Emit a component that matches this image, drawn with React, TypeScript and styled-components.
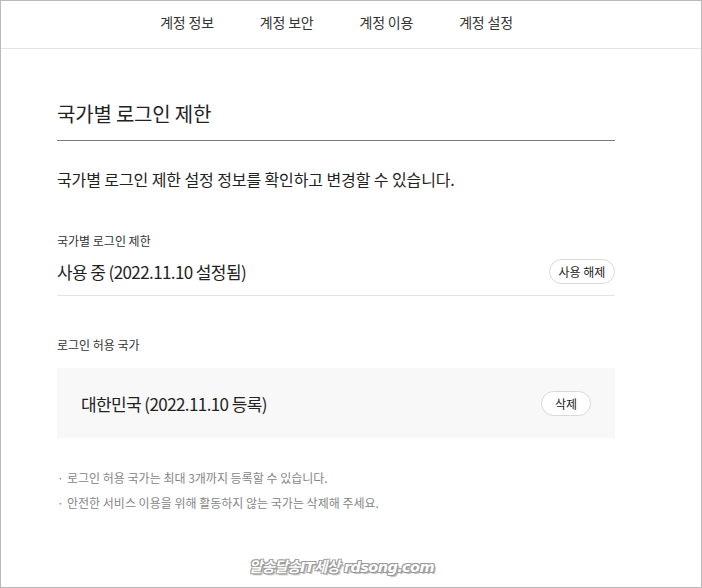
import React from 'react'
import styled, { createGlobalStyle } from 'styled-components'

const GlobalStyle = createGlobalStyle`
  html, body {
    margin: 0;
    padding: 0;
    background: #fff;
  }
  body {
    font-family: 'Noto Sans CJK KR', 'Noto Sans', sans-serif;
    color: #222;
  }
`

const Frame = styled.div`
  width: 702px;
  height: 588px;
  box-sizing: border-box;
  border: 1px solid #b9b9b9;
  position: relative;
  overflow: hidden;
`

const TopNav = styled.nav`
  height: 48px;
  border-bottom: 1px solid #e6e6e6;
  display: flex;
  justify-content: center;
  align-items: center;
  gap: 46px;
  padding-right: 29px;
  padding-bottom: 6px;
  box-sizing: border-box;
`

const NavItem = styled.a`
  font-size: 14px;
  color: #333;
  letter-spacing: -0.2px;
`

const Content = styled.main`
  width: 558px;
  margin-left: 56px;
  padding-top: 47px;
`

const Title = styled.h2`
  margin: 0;
  font-size: 20px;
  font-weight: 400;
  line-height: 36px;
  padding-bottom: 8px;
  border-bottom: 1px solid #7a7a7a;
  letter-spacing: -0.2px;
`

const Desc = styled.p`
  margin: 25px 0 0;
  font-size: 16px;
  line-height: 26px;
  letter-spacing: -0.1px;
`

const Label = styled.div<{ $top: number }>`
  margin-top: ${(p) => p.$top}px;
  margin-bottom: 2px;
  font-size: 12px;
  line-height: 18px;
  color: #333;
`

const StatusRow = styled.div`
  display: flex;
  justify-content: space-between;
  align-items: center;
  height: 38px;
  padding-bottom: 5px;
  border-bottom: 1px solid #e6e6e6;
`

const Value = styled.span`
  font-size: 17px;
  letter-spacing: -0.6px;
`

const PillButton = styled.button<{ $w: number }>`
  width: ${(p) => p.$w}px;
  height: 25px;
  border: 1px solid #d9d9d9;
  border-radius: 13px;
  background: #fff;
  font-family: inherit;
  font-size: 12px;
  color: #222;
  padding: 0;
  cursor: pointer;
`

const CountryBox = styled.div`
  margin-top: 14px;
  height: 70px;
  background: #f8f8f8;
  display: flex;
  justify-content: space-between;
  align-items: center;
  padding: 0 24px;
  box-sizing: border-box;
`

const Notes = styled.ul`
  margin: 31px 0 0;
  padding: 0;
  list-style: none;
  display: flex;
  flex-direction: column;
  gap: 7px;
`

const Note = styled.li`
  font-size: 12px;
  line-height: 18px;
  color: #868686;
  padding-left: 10px;
  position: relative;
  &::before {
    content: '·';
    position: absolute;
    left: 0;
    top: 0;
  }
`

const Watermark = styled.div`
  position: absolute;
  left: 248px;
  bottom: 11px;
  font-family: 'DejaVu Sans', 'Noto Sans CJK KR', sans-serif;
  font-size: 14.5px;
  font-weight: 700;
  font-style: italic;
  color: #fff;
  letter-spacing: -0.6px;
  text-shadow:
    1px 1px 0 #9a9a9a, -1px -1px 0 #9a9a9a, 1px -1px 0 #9a9a9a, -1px 1px 0 #9a9a9a,
    2px 2px 1px #bbb;
`

const App = () => {
  return (
    <>
      <GlobalStyle />
      <Frame>
        <TopNav>
          <NavItem>계정 정보</NavItem>
          <NavItem>계정 보안</NavItem>
          <NavItem>계정 이용</NavItem>
          <NavItem>계정 설정</NavItem>
        </TopNav>
        <Content>
          <Title>국가별 로그인 제한</Title>
          <Desc>국가별 로그인 제한 설정 정보를 확인하고 변경할 수 있습니다.</Desc>

          <Label $top={40}>국가별 로그인 제한</Label>
          <StatusRow>
            <Value>사용 중 (2022.11.10 설정됨)</Value>
            <PillButton $w={66}>사용 해제</PillButton>
          </StatusRow>

          <Label $top={40}>로그인 허용 국가</Label>
          <CountryBox>
            <Value>대한민국 (2022.11.10 등록)</Value>
            <PillButton $w={50}>삭제</PillButton>
          </CountryBox>

          <Notes>
            <Note>로그인 허용 국가는 최대 3개까지 등록할 수 있습니다.</Note>
            <Note>안전한 서비스 이용을 위해 활동하지 않는 국가는 삭제해 주세요.</Note>
          </Notes>
        </Content>
        <Watermark>알송달송IT세상 rdsong.com</Watermark>
      </Frame>
    </>
  )
}

export default App
